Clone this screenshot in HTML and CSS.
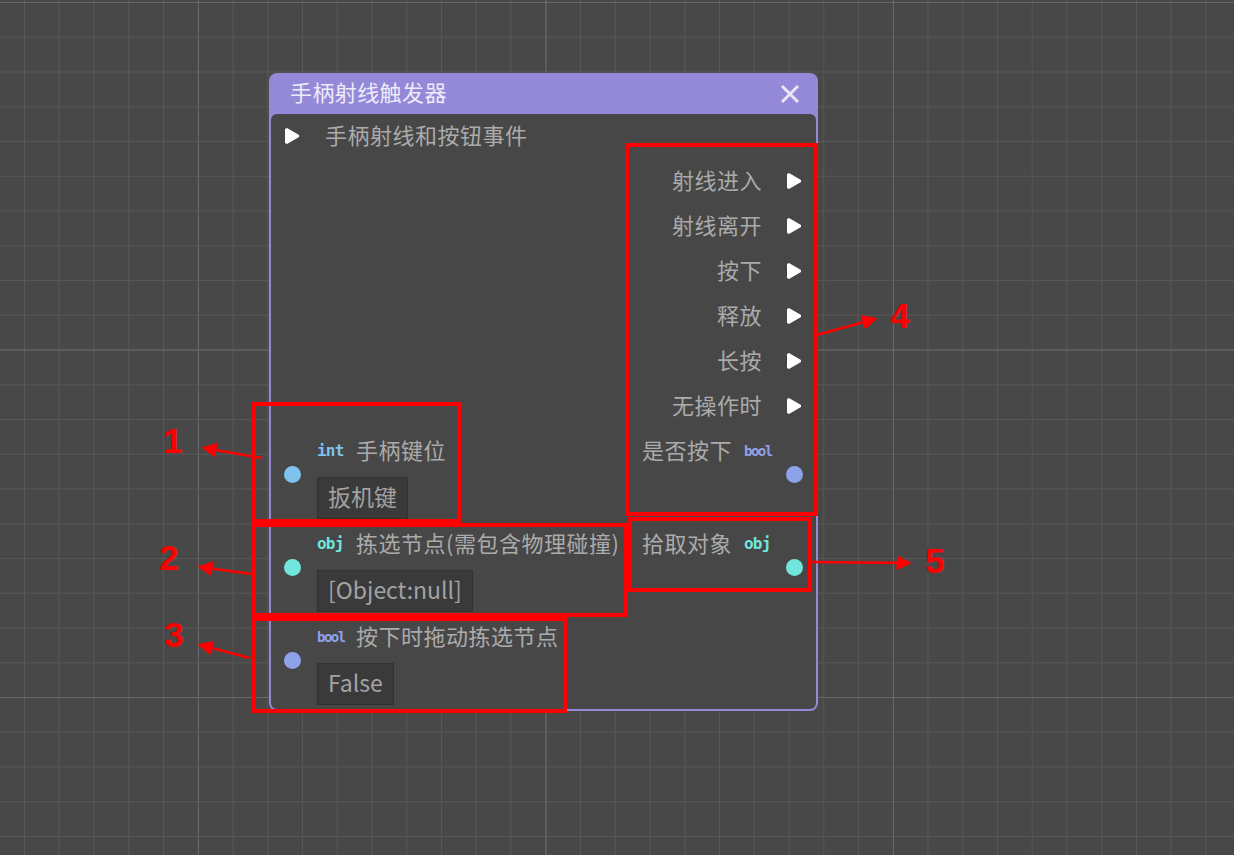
FILE: index.html
```html
<!DOCTYPE html>
<html lang="zh">
<head>
    <meta charset="UTF-8">
    <meta name="viewport" content="width=device-width, initial-scale=1.0">
    <title>手柄射线触发器</title>
    <link rel="stylesheet" href="styles.css">
</head>
<body>
<div class="canvas">
    <div class="node">
        <div class="node-header">
            <span class="node-title">手柄射线触发器</span>
            <svg class="close" width="20" height="20" viewBox="0 0 20 20">
                <path d="M2 2 L18 18 M18 2 L2 18" stroke="#e9e6f8" stroke-width="3" fill="none"/>
            </svg>
        </div>
        <div class="node-body">
            <div class="exec-in">
                <svg class="exec-arrow" width="14" height="16" viewBox="0 0 14 16"><polygon points="0,1 2,0 14,7 14,9 2,16 0,15" fill="#fff"/></svg>
                <span class="label">手柄射线和按钮事件</span>
            </div>

            <div class="exec-out">
                <span class="label">射线进入</span>
                <svg class="exec-arrow" width="14" height="16" viewBox="0 0 14 16"><polygon points="0,1 2,0 14,7 14,9 2,16 0,15" fill="#fff"/></svg>
            </div>
            <div class="exec-out">
                <span class="label">射线离开</span>
                <svg class="exec-arrow" width="14" height="16" viewBox="0 0 14 16"><polygon points="0,1 2,0 14,7 14,9 2,16 0,15" fill="#fff"/></svg>
            </div>
            <div class="exec-out">
                <span class="label">按下</span>
                <svg class="exec-arrow" width="14" height="16" viewBox="0 0 14 16"><polygon points="0,1 2,0 14,7 14,9 2,16 0,15" fill="#fff"/></svg>
            </div>
            <div class="exec-out">
                <span class="label">释放</span>
                <svg class="exec-arrow" width="14" height="16" viewBox="0 0 14 16"><polygon points="0,1 2,0 14,7 14,9 2,16 0,15" fill="#fff"/></svg>
            </div>
            <div class="exec-out">
                <span class="label">长按</span>
                <svg class="exec-arrow" width="14" height="16" viewBox="0 0 14 16"><polygon points="0,1 2,0 14,7 14,9 2,16 0,15" fill="#fff"/></svg>
            </div>
            <div class="exec-out">
                <span class="label">无操作时</span>
                <svg class="exec-arrow" width="14" height="16" viewBox="0 0 14 16"><polygon points="0,1 2,0 14,7 14,9 2,16 0,15" fill="#fff"/></svg>
            </div>

            <div class="data-row">
                <div class="port-in">
                    <span class="dot dot-int"></span>
                    <div class="port-main">
                        <div class="port-label"><span class="tag tag-int">int</span><span class="label">手柄键位</span></div>
                        <div class="field">扳机键</div>
                    </div>
                </div>
                <div class="port-out">
                    <div class="port-label"><span class="label">是否按下</span><span class="tag tag-bool">bool</span></div>
                    <span class="dot dot-bool"></span>
                </div>
            </div>

            <div class="data-row">
                <div class="port-in">
                    <span class="dot dot-obj"></span>
                    <div class="port-main">
                        <div class="port-label"><span class="tag tag-obj">obj</span><span class="label">拣选节点(需包含物理碰撞)</span></div>
                        <div class="field">[Object:null]</div>
                    </div>
                </div>
                <div class="port-out">
                    <div class="port-label"><span class="label">拾取对象</span><span class="tag tag-obj">obj</span></div>
                    <span class="dot dot-obj"></span>
                </div>
            </div>

            <div class="data-row">
                <div class="port-in">
                    <span class="dot dot-bool"></span>
                    <div class="port-main">
                        <div class="port-label"><span class="tag tag-bool">bool</span><span class="label">按下时拖动拣选节点</span></div>
                        <div class="field">False</div>
                    </div>
                </div>
                <div class="port-out"></div>
            </div>
        </div>
    </div>

    <!-- annotation layer -->
    <svg class="notes" width="1234" height="855" viewBox="0 0 1234 855">
        <defs>
            <marker id="head" markerWidth="6" markerHeight="6" refX="5" refY="3" orient="auto" markerUnits="strokeWidth">
                <polygon points="0,0 6,3 0,6" fill="#ff0000"/>
            </marker>
        </defs>
        <g fill="none" stroke="#ff0000" stroke-width="4">
            <rect x="254" y="404" width="205" height="117"/>
            <rect x="254" y="525" width="372" height="90"/>
            <rect x="254" y="619" width="311" height="92"/>
            <rect x="627" y="145" width="189" height="369"/>
            <rect x="630" y="519" width="180" height="71"/>
        </g>
        <g stroke="#ff0000" stroke-width="2.5" marker-end="url(#head)">
            <line x1="262" y1="458" x2="204" y2="448"/>
            <line x1="252" y1="574" x2="200" y2="567"/>
            <line x1="250" y1="658" x2="200" y2="645"/>
            <line x1="813" y1="336" x2="875" y2="319"/>
            <line x1="812" y1="562" x2="909" y2="563"/>
        </g>
        <g class="note-num" fill="#ff0000" text-anchor="middle">
            <text x="173" y="453">1</text>
            <text x="169" y="570">2</text>
            <text x="174" y="647">3</text>
            <text x="900" y="328">4</text>
            <text x="935" y="573">5</text>
        </g>
    </svg>
</div>
</body>
</html>
```

FILE: styles.css
```css
body {
    margin: 0;
    background-color: #484848;
    font-family: "Noto Sans CJK SC", "Noto Sans", sans-serif;
}

.canvas {
    position: relative;
    width: 1234px;
    height: 855px;
    overflow: hidden;
    background-color: #484848;
    background-image:
        linear-gradient(to right, #686868 1px, transparent 1px),
        linear-gradient(to bottom, #686868 1px, transparent 1px),
        linear-gradient(to right, #575757 1px, transparent 1px),
        linear-gradient(to bottom, #575757 1px, transparent 1px);
    background-size: 347.5px 347.5px, 347.5px 347.5px, 34.75px 34.75px, 34.75px 34.75px;
    background-position: 198px 2px, 198px 2px, 24px 2px, 24px 2px;
}

.node {
    position: absolute;
    left: 269px;
    top: 73px;
    width: 549px;
    height: 638px;
    display: flex;
    flex-direction: column;
    background-color: #9389d8;
    border-radius: 8px;
}

.node-header {
    height: 41px;
    flex: none;
    display: flex;
    align-items: center;
    justify-content: space-between;
    padding: 0 18px 0 21px;
}

.node-title {
    color: #eeebf9;
    font-size: 22px;
    letter-spacing: 0.4px;
    padding-bottom: 5px;
}

.close {
    display: block;
}

.node-body {
    flex: 1;
    margin: 0 2px 2px;
    background-color: #474747;
    border-radius: 6px;
    display: flex;
    flex-direction: column;
}

.label {
    color: #ababab;
    font-size: 22px;
    letter-spacing: 0.5px;
    white-space: nowrap;
    padding-bottom: 4px;
}

.exec-arrow {
    display: block;
    flex: none;
}

.exec-in {
    height: 44px;
    display: flex;
    align-items: center;
    padding-left: 14px;
}

.exec-in .exec-arrow {
    margin-right: 26px;
}

.exec-out {
    height: 45px;
    display: flex;
    align-items: center;
    justify-content: flex-end;
    padding-right: 15px;
}

.exec-out .exec-arrow {
    margin-left: 25px;
}

.data-row {
    height: 93px;
    display: grid;
    grid-template-columns: 1fr 174px;
}

.port-in {
    display: flex;
}

.port-in .dot {
    margin: 38px 16px 0 13px;
}

.port-main {
    display: flex;
    flex-direction: column;
    align-items: flex-start;
}

.port-label {
    height: 46px;
    display: flex;
    align-items: center;
}

.port-in .tag {
    width: 27px;
    margin-right: 12px;
}

.port-out {
    display: flex;
    flex-direction: column;
}

.port-out .tag {
    margin-left: 12px;
}

.port-out .dot {
    align-self: flex-end;
    margin: -8px 13px 0 0;
}

.dot {
    display: block;
    flex: none;
    width: 17px;
    height: 17px;
    border-radius: 50%;
}

.dot-int { background-color: #7dc3ee; }
.dot-obj { background-color: #71e6dd; }
.dot-bool { background-color: #8ea2ea; }

.tag {
    font-family: "DejaVu Sans Mono", monospace;
    font-weight: bold;
    font-size: 16px;
    line-height: 16px;
    letter-spacing: -0.8px;
    white-space: nowrap;
}

.tag-int { color: #7dc3ee; }
.tag-obj { color: #71e6dd; }
.tag-bool {
    color: #8ea2ea;
    font-size: 14px;
    letter-spacing: -1.5px;
}

.field {
    margin-top: 3px;
    height: 42px;
    box-sizing: border-box;
    display: flex;
    align-items: center;
    padding: 0 10px 4px;
    background-color: #3a3a3a;
    border: 1px solid #323232;
    color: #a2a2a2;
    font-size: 23px;
    white-space: nowrap;
}

.notes {
    position: absolute;
    left: 0;
    top: 0;
    pointer-events: none;
}

.note-num {
    font-family: "Liberation Sans", Arial, sans-serif;
    font-weight: bold;
    font-size: 35px;
}
```
